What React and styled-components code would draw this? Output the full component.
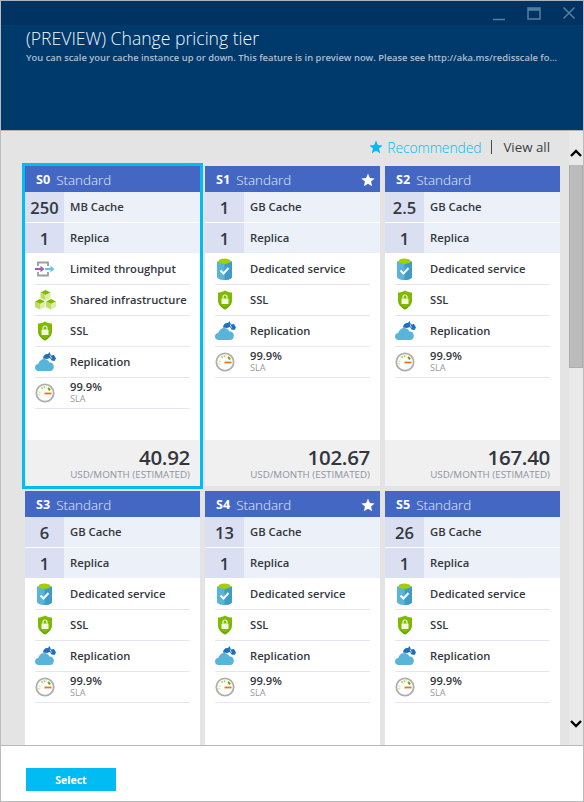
import React from 'react';
import styled, { createGlobalStyle } from 'styled-components';

const Global = createGlobalStyle`
    html, body { margin: 0; padding: 0; background: #fff; }
    * { box-sizing: border-box; }
    body { font-family: 'Open Sans', 'Noto Sans', 'Liberation Sans', sans-serif; }
`;

const Blade = styled.div`
    width: 584px;
    height: 802px;
    border: 1px solid #bcbcbc;
    border-top-color: #a8b4c0;
    display: flex;
    flex-direction: column;
    overflow: hidden;
`;

const Header = styled.header`
    height: 130px;
    flex: none;
    background: #003a6c;
    border-bottom: 1px solid #b4b4b4;
`;

const TitleBar = styled.div`
    height: 24px;
    background: #003362;
    display: flex;
    justify-content: flex-end;
    align-items: center;
    gap: 19px;
    padding: 0 6px 0 0;
`;

const WinIcon = styled.svg`
    display: block;
    width: 16px;
    height: 16px;
    color: #55809f;
`;

const Heading = styled.div`
    padding: 2px 0 0 25px;
    color: #fff;
`;

const Title = styled.h1`
    margin: 0;
    font-size: 17.6px;
    line-height: 22px;
    font-weight: 300;
    color: #f2f6fa;
    white-space: nowrap;
`;

const Subtitle = styled.p`
    margin: 2px 0 0;
    font-size: 9.4px;
    line-height: 14px;
    font-weight: 600;
    color: #aebfd0;
    white-space: nowrap;
`;

const Body = styled.div`
    flex: 1;
    min-height: 0;
    display: flex;
    background: #e4e4e4;
`;

const Main = styled.div`
    flex: 1;
    min-width: 0;
    overflow: hidden;
    padding: 0 8px 0 24px;
`;

const Filter = styled.div`
    height: 35px;
    display: flex;
    align-items: center;
    justify-content: flex-end;
    padding: 0 11px 3px 0;
    font-size: 13.3px;
    color: #3b3f45;
`;

const Recommended = styled.span`
    display: flex;
    align-items: center;
    gap: 4px;
    font-size: 13.9px;
    font-weight: 300;
    color: #00bcf2;
    letter-spacing: -0.1px;
`;

const Divider = styled.span`
    width: 1px;
    height: 14px;
    background: #44484e;
    margin: 0 11px 0 10px;
`;

const Grid = styled.div`
    display: grid;
    grid-template-columns: repeat(3, 175px);
    grid-auto-rows: 320px;
    column-gap: 5px;
    row-gap: 5px;
`;

const Card = styled.article`
    display: flex;
    flex-direction: column;
    background: #fff;
    box-shadow: ${({$selected}) => $selected ? '0 0 0 3px #00bcf2' : 'none'};
`;

const CardHead = styled.div`
    height: 26px;
    flex: none;
    background: #4467c4;
    color: #e6ecf8;
    display: flex;
    align-items: center;
    padding: 1px 5px 0 11px;
    font-size: 13.4px;
    font-weight: 300;
`;

const Tier = styled.b`
    color: #fff;
    font-size: 12.6px;
    font-weight: 700;
    margin-right: 6px;
`;

const HeadStar = styled.span`
    margin-left: auto;
    display: flex;
`;

const SpecRow = styled.div`
    height: 30px;
    flex: none;
    display: flex;
    background: #ecf0f9;
    margin-bottom: 1px;
`;

const SpecValue = styled.div`
    width: 39px;
    background: #dae0f2;
    display: flex;
    align-items: center;
    justify-content: center;
    font-size: 16.5px;
    font-weight: 600;
    color: #33373d;
`;

const SpecLabel = styled.div`
    padding: 0 0 1px 6px;
    display: flex;
    align-items: center;
    font-size: 11.3px;
    font-weight: 600;
    color: #33373d;
`;

const FeatureList = styled.ul`
    list-style: none;
    margin: 0;
    padding: 0 10px;
`;

const Feature = styled.li`
    height: 31px;
    padding-bottom: 1px;
    display: flex;
    align-items: center;
    border-bottom: 1px solid #e6e6f2;
    font-size: 11.2px;
    font-weight: 600;
    color: #33373d;
    white-space: nowrap;
`;

const IconCell = styled.span`
    width: 35px;
    flex: none;
    display: flex;
    align-items: center;
    padding-left: ${({$inset}) => $inset || 0}px;
`;

const Sla = styled.span`
    display: flex;
    flex-direction: column;
    line-height: 12px;
    padding-top: 1px;
    small {
        font-size: 9.2px;
        font-weight: 400;
        color: #9a9a9a;
    }
`;

const Price = styled.div`
    margin-top: auto;
    height: 46px;
    flex: none;
    background: #f0f0f0;
    padding: 6px 10px 0 0;
    text-align: right;
`;

const Amount = styled.div`
    font-size: 20.5px;
    line-height: 23px;
    font-weight: 600;
    letter-spacing: -0.3px;
    color: #33373d;
`;

const Unit = styled.div`
    font-size: 9.8px;
    line-height: 12px;
    color: #8d95a3;
    white-space: nowrap;
`;

const ScrollBar = styled.div`
    width: 14px;
    flex: none;
    background: #e9e9e9;
    display: flex;
    flex-direction: column;
    align-items: center;
`;

const ScrollArrow = styled.svg`
    display: block;
    flex: none;
    width: 12px;
    height: 8px;
    margin-top: ${({$top}) => $top}px;
`;

const Thumb = styled.div`
    width: 14px;
    height: 203px;
    flex: none;
    margin-top: 8px;
    background: #bbb;
    border: 1px solid #adadad;
    border-top: none;
`;

const Footer = styled.footer`
    height: 56px;
    flex: none;
    background: #fff;
    border-top: 1px solid #b8b8b8;
    padding: 22px 0 0 25px;
`;

const SelectButton = styled.button`
    display: block;
    width: 90px;
    height: 23px;
    border: none;
    padding: 0;
    background: #00bcf2;
    color: #fff;
    font: 700 10.5px 'Open Sans', sans-serif;
`;

const Star = ({size, color}) => (
    <svg width={size} height={size} viewBox="0 0 24 24" fill={color}>
        <path d="M12 1l3.2 7.6 8.3.7-6.3 5.4 1.9 8.1L12 18.500 4.900 22.800l1.900-8.100L.5 9.300l8.300-.7z"/>
    </svg>
);

const ThroughputIcon = () => (
    <svg width="20" height="16" viewBox="0 0 20 16" fill="none">
        <path d="M3 5V1.500h10V5M3 11v3.500h10V11" stroke="#9a9ea2" strokeWidth="1.800"/>
        <path d="M0 8h6" stroke="#9b62ac" strokeWidth="2.200"/>
        <path d="M5.500 4.800L9.500 8l-4 3.200z" fill="#9b62ac"/>
        <path d="M10 8h6" stroke="#63c4e6" strokeWidth="2.200"/>
        <path d="M15.500 4.800L19.500 8l-4 3.200z" fill="#63c4e6"/>
    </svg>
);

const Cube = ({x, y}) => (
    <g transform={`translate(${x} ${y})`}>
        <path d="M5 0l5 2.500L5 5 0 2.500z" fill="#7fb900"/>
        <path d="M0 2.500L5 5v5.500L0 8z" fill="#bede5c"/>
        <path d="M10 2.500L5 5v5.500L10 8z" fill="#dcedaa"/>
    </g>
);

const CubesIcon = () => (
    <svg width="21" height="20" viewBox="0 0 21 20">
        <Cube x={5.500} y={0}/>
        <Cube x={0} y={9}/>
        <Cube x={11} y={9}/>
    </svg>
);

const ShieldIcon = () => (
    <svg width="20" height="20" viewBox="0 0 20 20">
        <path d="M10 0.500c2.500 1.500 4.500 2 7 2v8c0 4-3 7-7 9-4-2-7-5-7-9v-8c2.500 0 4.500-.5 7-2z" fill="#7fba00"/>
        <path d="M10 17.500c-3-1.500-5.800-3.800-6-7v.5c0 3.800 3 6.700 6 8.500 3-1.800 6-4.700 6-8.500v-.5c-.2 3.200-3 5.500-6 7z" fill="#6aa800"/>
        <rect x="6.500" y="8.500" width="7" height="5.500" rx=".5" fill="#f2f8dc"/>
        <path d="M8 8.500V7a2 2 0 014 0v1.500" fill="none" stroke="#f2f8dc" strokeWidth="1.200"/>
    </svg>
);

const CloudIcon = () => (
    <svg width="21" height="19" viewBox="0 0 21 19">
        <path d="M8 6.500C8.300 3 10.500 1.500 13 2l1.500-2 1.500 3.500 3-.5 2 3.500-1.500 2.500-3-.5-1.500-2.500-3 1z" fill="#1f6fbf"/>
        <path d="M15 3.500l1.500 3" stroke="#fff" strokeWidth=".8"/>
        <path d="M3.500 19C1.500 19 0 17.500 0 15.500S1.500 12 3.200 12C4 9 6.500 7 9 7c2.500 0 4.500 1.500 5.500 3.500 2.800-.3 4.300 1.500 4.300 4.200 0 2.600-1.300 4.300-3.800 4.300z" fill="#59b4d9"/>
    </svg>
);

const GaugeIcon = () => (
    <svg width="20" height="20" viewBox="0 0 20 20" fill="none">
        <circle cx="10" cy="10" r="8.700" fill="#fff" stroke="#aeaeae" strokeWidth="1.800"/>
        <path d="M4.500 12.500a6 6 0 01.8-5" stroke="#d5e59a" strokeWidth="2" strokeDasharray="1.500 1"/>
        <path d="M6.500 5.500a6 6 0 015-1.200" stroke="#a9cf4a" strokeWidth="2" strokeDasharray="1.500 1"/>
        <path d="M13 5a6 6 0 012 2.500" stroke="#6aa800" strokeWidth="2"/>
        <path d="M9.500 10.500h7" stroke="#e8741e" strokeWidth="1.800"/>
    </svg>
);

const ServiceIcon = () => (
    <svg width="15" height="22" viewBox="0 0 15 22">
        <path d="M0 3.500v15c0 2 3 3.500 7.500 3.500S15 20.500 15 18.500v-15z" fill="#59b4d9"/>
        <path d="M7.500 6V22c4.500 0 7.500-1.500 7.500-3.500v-15z" fill="#3f9bc9"/>
        <ellipse cx="7.500" cy="3.200" rx="6" ry="2.700" fill="#a5ce00"/>
        <path d="M3.500 12.500l3 3 5-5.500" fill="none" stroke="#fff" strokeWidth="2"/>
    </svg>
);

const FEATURE_ICONS = {
    'Limited throughput': ThroughputIcon,
    'Shared infrastructure': CubesIcon,
    'Dedicated service': ServiceIcon,
    SSL: ShieldIcon,
    Replication: CloudIcon,
};

const BASIC = ['Limited throughput', 'Shared infrastructure', 'SSL', 'Replication'];
const DEDICATED = ['Dedicated service', 'SSL', 'Replication'];

const TIERS = [
    {id: 'S0', size: '250', unit: 'MB Cache', features: BASIC, price: '40.92', selected: true},
    {id: 'S1', size: '1', unit: 'GB Cache', features: DEDICATED, price: '102.67', star: true},
    {id: 'S2', size: '2.5', unit: 'GB Cache', features: DEDICATED, price: '167.40'},
    {id: 'S3', size: '6', unit: 'GB Cache', features: DEDICATED},
    {id: 'S4', size: '13', unit: 'GB Cache', features: DEDICATED, star: true},
    {id: 'S5', size: '26', unit: 'GB Cache', features: DEDICATED},
];

const TierCard = ({id, size, unit, features, price, star, selected}) => (
    <Card $selected={selected}>
        <CardHead>
            <Tier>{id}</Tier> Standard
            {star && <HeadStar><Star size={14} color="#fff"/></HeadStar>}
        </CardHead>
        <SpecRow>
            <SpecValue>{size}</SpecValue>
            <SpecLabel>{unit}</SpecLabel>
        </SpecRow>
        <SpecRow>
            <SpecValue>1</SpecValue>
            <SpecLabel>Replica</SpecLabel>
        </SpecRow>
        <FeatureList>
            {features.map(name => {
                const Icon = FEATURE_ICONS[name];
                return (
                    <Feature key={name}>
                        <IconCell $inset={name === 'Dedicated service' ? 2 : 0}><Icon/></IconCell>
                        {name}
                    </Feature>
                );
            })}
            <Feature>
                <IconCell><GaugeIcon/></IconCell>
                <Sla>99.9%<small>SLA</small></Sla>
            </Feature>
        </FeatureList>
        {price && (
            <Price>
                <Amount>{price}</Amount>
                <Unit>USD/MONTH (ESTIMATED)</Unit>
            </Price>
        )}
    </Card>
);

export default function App() {
    return (
        <Blade>
            <Global/>
            <Header>
                <TitleBar>
                    <WinIcon viewBox="0 0 16 16" fill="none" stroke="currentColor" strokeWidth="1.500">
                        <path d="M2 14.500h12"/>
                    </WinIcon>
                    <WinIcon viewBox="0 0 16 16" fill="none" stroke="currentColor">
                        <path d="M2 3h12v11H2z" strokeWidth="1.500"/>
                        <path d="M2 4.500h12" strokeWidth="2.500"/>
                    </WinIcon>
                    <WinIcon viewBox="0 0 16 16" fill="none" stroke="currentColor" strokeWidth="1.500">
                        <path d="M2.500 2.500l11 11M13.500 2.500l-11 11"/>
                    </WinIcon>
                </TitleBar>
                <Heading>
                    <Title>(PREVIEW) Change pricing tier</Title>
                    <Subtitle>You can scale your cache instance up or down. This feature is in preview now. Please see http://aka.ms/redisscale fo...</Subtitle>
                </Heading>
            </Header>
            <Body>
                <Main>
                    <Filter>
                        <Recommended><Star size={14} color="#00bcf2"/>Recommended</Recommended>
                        <Divider/>
                        <span>View all</span>
                    </Filter>
                    <Grid>
                        {TIERS.map(tier => <TierCard key={tier.id} {...tier}/>)}
                    </Grid>
                </Main>
                <ScrollBar>
                    <ScrollArrow $top={18} viewBox="0 0 12 8" fill="none" stroke="#000" strokeWidth="2.400">
                        <path d="M1 7l5-5 5 5"/>
                    </ScrollArrow>
                    <Thumb/>
                    <ScrollArrow $top={352} viewBox="0 0 12 8" fill="none" stroke="#000" strokeWidth="2.400">
                        <path d="M1 1l5 5 5-5"/>
                    </ScrollArrow>
                </ScrollBar>
            </Body>
            <Footer>
                <SelectButton>Select</SelectButton>
            </Footer>
        </Blade>
    );
}
